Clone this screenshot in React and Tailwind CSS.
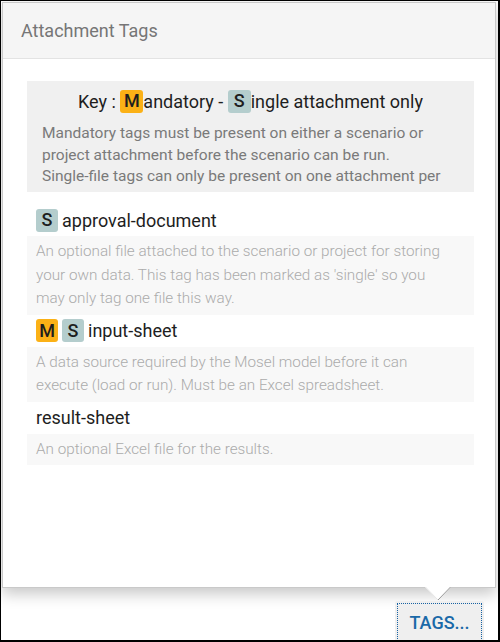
import React from 'react'

const tags = [
  {
    name: 'approval-document',
    mandatory: false,
    single: true,
    lines: [
      'An optional file attached to the scenario or project for storing',
      "your own data. This tag has been marked as 'single' so you",
      'may only tag one file this way.',
    ],
  },
  {
    name: 'input-sheet',
    mandatory: true,
    single: true,
    lines: [
      'A data source required by the Mosel model before it can',
      'execute (load or run). Must be an Excel spreadsheet.',
    ],
  },
  {
    name: 'result-sheet',
    mandatory: false,
    single: false,
    lines: ['An optional Excel file for the results.'],
  },
]

function Badge({ kind, className = '' }) {
  return (
    <span
      className={`inline-flex items-center justify-center w-[22px] h-[23px] rounded-[3px] text-[18px] font-medium leading-none text-[#1e1e1e] ${
        kind === 'M' ? 'bg-[#fbb116]' : 'bg-[#b4cdcd]'
      } ${className}`}
    >
      {kind}
    </span>
  )
}

export default function App() {
  return (
    <div className="w-[500px] h-[642px] bg-white border-t border-l border-r-2 border-b-2 border-black overflow-hidden font-['Roboto',sans-serif]">
      {/* Popover */}
      <div className="ml-[1px] mt-[1px] w-[494px] h-[586px] bg-white border border-[#c9c9c9] shadow-[0_6px_14px_rgba(0,0,0,0.22)] flex flex-col">
        <div className="h-[56px] shrink-0 bg-[#f5f5f5] border-b border-[#e3e3e3] px-[18px] flex items-center">
          <h2 className="text-[18px] text-[#767676]">Attachment Tags</h2>
        </div>

        <div className="pt-[22px] pl-[24px] pr-[21px]">
          {/* Key */}
          <div className="h-[111px] overflow-hidden bg-[#f0f0f0] pt-2 px-[15px]">
            <div className="h-6 flex items-center justify-center text-[18px] text-[#1e1e1e] whitespace-pre">
              <span>Key : </span>
              <Badge kind="M" className="w-[23px]" />
              <span>andatory - </span>
              <Badge kind="S" className="w-[23px]" />
              <span>ingle attachment only</span>
            </div>
            <p className="mt-[10px] text-[15.5px] leading-[21.5px] text-[#7a7a7a]">
              Mandatory tags must be present on either a scenario or
              <br />
              project attachment before the scenario can be run.
              <br />
              Single-file tags can only be present on one attachment per
              <br />
              scenario or project.
            </p>
          </div>

          {/* Tags */}
          <div className="mt-3">
            {tags.map(tag => (
              <div key={tag.name}>
                <div className="h-8 pl-[9px] flex items-center gap-1">
                  {tag.mandatory && <Badge kind="M" />}
                  {tag.single && <Badge kind="S" />}
                  <span className="text-[18px] text-[#1e1e1e]">{tag.name}</span>
                </div>
                <div className="bg-[#f8f8f8] px-[9px] py-1 text-[15.25px] leading-[23.5px] font-light text-[#ababab] whitespace-nowrap">
                  {tag.lines.map(line => (
                    <div key={line}>{line}</div>
                  ))}
                </div>
              </div>
            ))}
          </div>
        </div>
      </div>

      {/* Arrow */}
      <div className="-mt-[1px] ml-[424px] w-[26px] h-[14px]">
        <svg width="26" height="14" viewBox="0 0 26 14">
          <polygon points="0,0 26,0 13,13" fill="#fff" />
          <line x1="0.5" y1="0" x2="13" y2="13" stroke="#e6e6e6" strokeWidth="1" />
          <line x1="25.5" y1="0" x2="13" y2="13" stroke="#9a9a9a" strokeWidth="1" />
        </svg>
      </div>

      {/* Button */}
      <button className="ml-[394px] w-[89px] h-[42px] bg-[#efefef] rounded-[2px] p-[2px]">
        <div className="h-full border border-dotted border-[#1762a3] flex items-center justify-center text-[18px] font-medium text-[#1a69a8]">
          TAGS...
        </div>
      </button>
    </div>
  )
}
